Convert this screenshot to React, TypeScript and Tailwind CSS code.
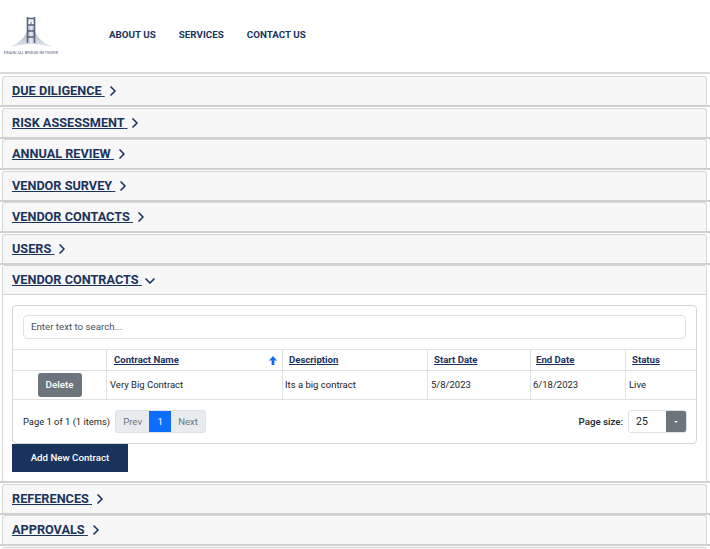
import { ChevronDown, ChevronRight } from 'lucide-react';

const NAV = ['ABOUT US', 'SERVICES', 'CONTACT US'];
const TOP_SECTIONS = ['DUE DILIGENCE', 'RISK ASSESSMENT', 'ANNUAL REVIEW', 'VENDOR SURVEY', 'VENDOR CONTACTS', 'USERS'];
const BOTTOM_SECTIONS = ['REFERENCES', 'APPROVALS', ''];

function Logo() {
  return (
    <div className="flex w-[56px] flex-col items-center blur-[0.3px]">
      <svg width="50" height="33" viewBox="0 0 50 33">
        <defs>
          <linearGradient id="fade" x1="0" y1="0" x2="0" y2="1">
            <stop offset="0" stopColor="#3b4a6e" />
            <stop offset="1" stopColor="#c5ccdc" />
          </linearGradient>
        </defs>
        <path d="M4 30 C14 26 22 18 25 3 C28 18 36 26 46 30 C38 28 31 27 25 27 C19 27 12 28 4 30Z" fill="url(#fade)" opacity="0.55" />
        <path d="M25 27 L25 8" stroke="#dfe3ec" strokeWidth="3" />
        <path d="M21.5 26 L21.5 0 M28.5 26 L28.5 0" stroke="#56627f" strokeWidth="1.6" />
        <path d="M21 1.5 H29 M21 8 H29 M21 14 H29 M21 20 H29" stroke="#56627f" strokeWidth="1.6" />
      </svg>
      <span className="text-[4px] leading-[5px] whitespace-nowrap text-[#5f6b84]">FINANCIAL BRIDGE NETWORK</span>
    </div>
  );
}

function SectionHeader({ title, open }: { title: string; open?: boolean }) {
  return (
    <div className="flex h-full items-center pl-[9px]">
      {title && (
        <>
          <span className="text-[12.7px] font-bold whitespace-pre text-[#1a335d] underline">{title} </span>
          {open ? (
            <ChevronDown size={16} strokeWidth={2.5} className="mt-[1px] text-[#1a335d]" />
          ) : (
            <ChevronRight size={16} strokeWidth={2.5} className="text-[#1a335d]" />
          )}
        </>
      )}
    </div>
  );
}

function Section({ title }: { title: string }) {
  return (
    <div className="mr-[3px] ml-[2px] h-[29px] rounded-t-[3px] border-x border-t border-[#d6d6d6] bg-[#f7f7f7]">
      <SectionHeader title={title} />
    </div>
  );
}

function Th({ label, className }: { label: string; className: string }) {
  return (
    <div className={`flex items-center border-r border-[#dee2e6] text-[9.6px] font-bold text-[#1a335d] ${className}`}>
      <span className="underline">{label}</span>
    </div>
  );
}

function Td({ label, className }: { label: string; className: string }) {
  return <div className={`flex items-center border-r border-[#dee2e6] text-[9.5px] text-[#212529] ${className}`}>{label}</div>;
}

function ContractsPanel() {
  return (
    <div className="mr-[3px] ml-[2px] rounded-t-[3px] border-x border-t border-[#d6d6d6] bg-white">
      <div className="h-[29px] border-b border-[#d6d6d6] bg-[#f7f7f7]">
        <SectionHeader title="VENDOR CONTRACTS" open />
      </div>
      <div className="px-[9px] pt-[10px] pb-[9px]">
        <div className="rounded-[4px] border border-[#d6d6d6]">
          <div className="px-[10px] pt-[9px] pb-[10px]">
            <div className="flex h-[24px] items-center rounded-[4px] border border-[#dee2e6] pt-[1px] pl-[7px] text-[9.7px] text-[#495057]">
              Enter text to search...
            </div>
          </div>
          <div className="flex h-[22px] border-y border-[#dee2e6]">
            <div className="w-[94px] border-r border-[#dee2e6]" />
            <div className="flex w-[176px] items-center justify-between border-r border-[#dee2e6] pr-[5px] pl-[7px] text-[9.6px] font-bold text-[#1a335d]">
              <span className="underline">Contract Name</span>
              <svg width="8" height="9" viewBox="0 0 8 9">
                <path d="M4 0 L8 4.5 H5.4 V9 H2.6 V4.5 H0 Z" fill="#0d6efd" />
              </svg>
            </div>
            <Th label="Description" className="w-[145px] pl-[6px]" />
            <Th label="Start Date" className="w-[103px] pl-[6px]" />
            <Th label="End Date" className="w-[95px] pl-[5px]" />
            <Th label="Status" className="flex-1 border-r-0 pl-[6px]" />
          </div>
          <div className="flex h-[29px] border-b border-[#dee2e6]">
            <div className="flex w-[94px] items-center justify-center border-r border-[#dee2e6]">
              <div className="flex h-[24px] w-[44px] items-center justify-center rounded-[3px] bg-[#6c757d] text-[9.8px] font-medium text-white">
                Delete
              </div>
            </div>
            <Td label="Very Big Contract" className="w-[176px] pl-[3px]" />
            <Td label="Its a big contract" className="w-[145px] pl-[2px]" />
            <Td label="5/8/2023" className="w-[103px] pl-[3px]" />
            <Td label="6/18/2023" className="w-[95px] pl-[2px]" />
            <Td label="Live" className="flex-1 border-r-0 pl-[3px]" />
          </div>
          <div className="flex h-[43px] items-center justify-between pr-[9px] pl-[10px]">
            <div className="flex items-center">
              <span className="mr-[5px] pt-[1px] text-[9.4px] text-[#212529]">Page 1 of 1 (1 items)</span>
              <div className="flex h-[23px] overflow-hidden rounded-[3px] border border-[#dee2e6] bg-[#e9ecef] pt-0 text-[9.6px] text-[#6c757d]">
                <span className="flex w-[33px] items-center justify-center pt-[1px]">Prev</span>
                <span className="flex w-[22px] items-center justify-center bg-[#0d6efd] pt-[1px] text-white">1</span>
                <span className="flex w-[34px] items-center justify-center pt-[1px]">Next</span>
              </div>
            </div>
            <div className="flex items-center">
              <span className="mr-[5px] pt-[1px] text-[9.7px] font-medium text-[#212529]">Page size:</span>
              <div className="flex h-[23px] w-[59px] overflow-hidden rounded-[3px] border border-[#dee2e6]">
                <span className="flex flex-1 items-center pl-[7px] text-[10.5px] text-[#212529]">25</span>
                <span className="flex w-[20px] items-center justify-center bg-[#6c757d]">
                  <svg width="4" height="2" viewBox="0 0 4 2">
                    <path d="M0 0 H4 L2 2 Z" fill="#fff" />
                  </svg>
                </span>
              </div>
            </div>
          </div>
        </div>
        <div className="flex h-[28px] w-[116px] items-center justify-center bg-[#1a335d] pt-[1px] text-[9.7px] font-medium text-white">
          Add New Contract
        </div>
      </div>
    </div>
  );
}

export default function App() {
  return (
    <div className="h-[549px] w-[710px] overflow-hidden bg-white font-['Roboto',sans-serif]">
      <header className="flex h-[74px] items-center border-b-2 border-[#d9d9d9] pl-[3px]">
        <Logo />
        <nav className="ml-[50px] flex gap-[23px] pb-[2px]">
          {NAV.map(item => (
            <span key={item} className="text-[9.8px] font-bold text-[#1a335d]">{item}</span>
          ))}
        </nav>
      </header>
      <div className="flex flex-col gap-[0.5px] pt-[2px]">
        {TOP_SECTIONS.map(title => (
          <div key={title} className="border-b-2 border-[#d0d0d0]">
            <Section title={title} />
          </div>
        ))}
        <div className="border-b-2 border-[#d0d0d0]">
          <ContractsPanel />
        </div>
        {BOTTOM_SECTIONS.map((title, i) => (
          <div key={i} className="border-b-2 border-[#d0d0d0]">
            <Section title={title} />
          </div>
        ))}
      </div>
    </div>
  );
}
